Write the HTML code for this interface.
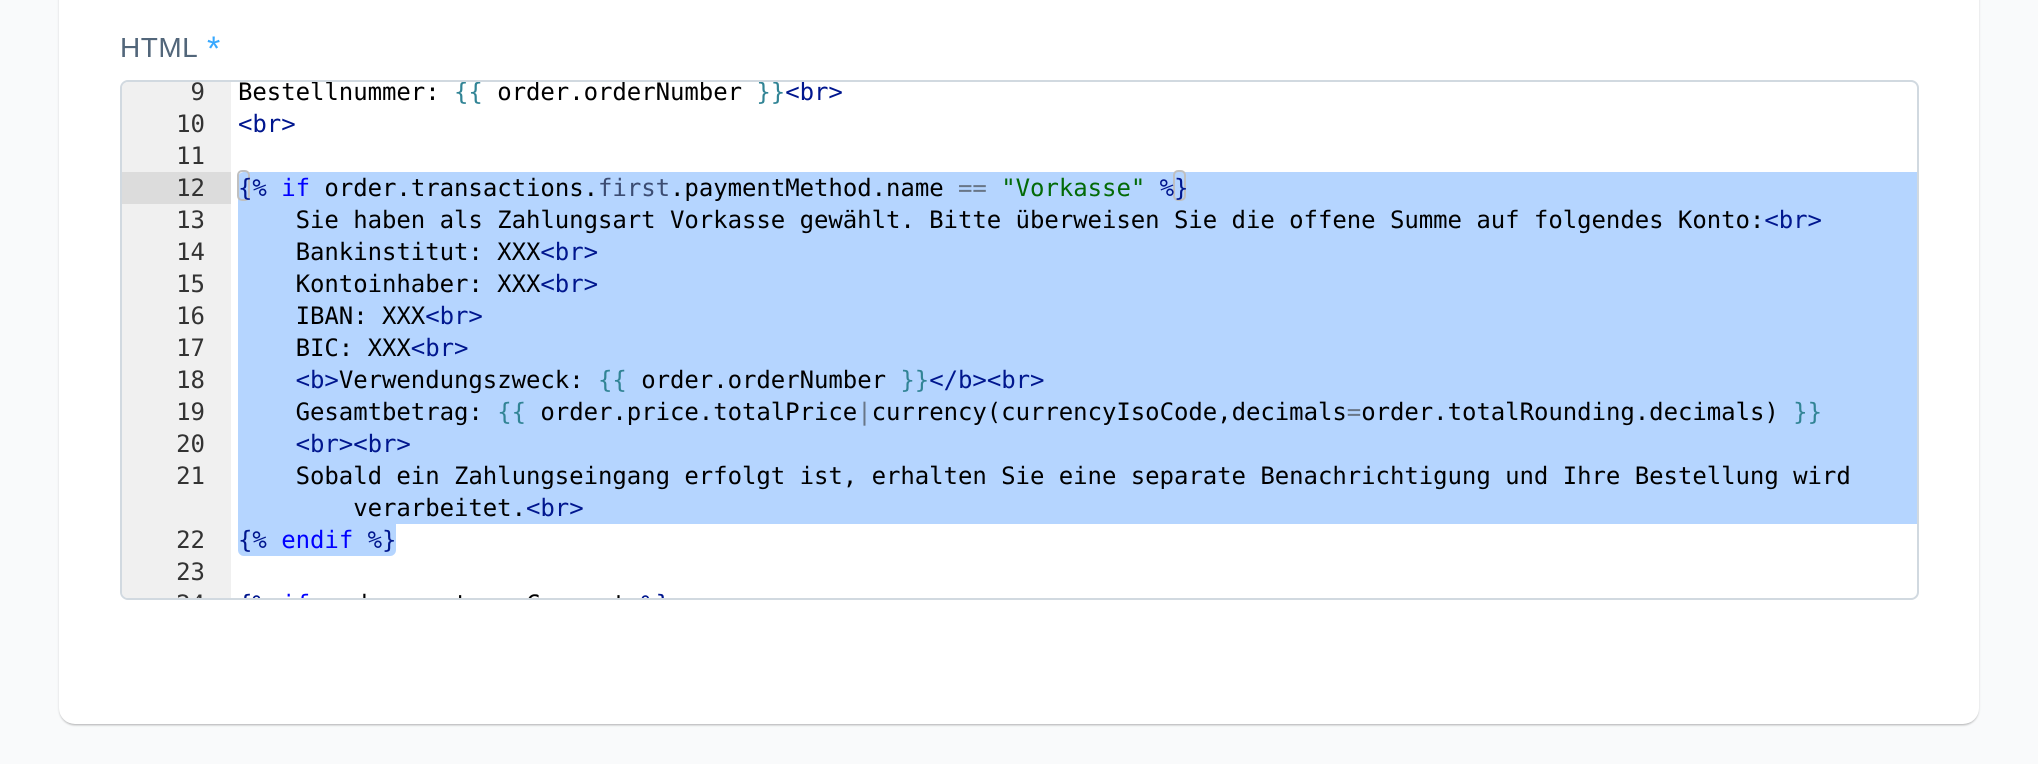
<!DOCTYPE html>
<html lang="de">
<head>
<meta charset="utf-8">
<title>HTML</title>
<style>
html,body{margin:0;padding:0;width:2038px;height:764px;overflow:hidden;background:#f9fafb}
.card{position:absolute;left:59px;top:-40px;width:1920px;height:764px;background:#fff;border-radius:16px;box-shadow:0 2px 2px -1px rgba(0,0,0,.28),0 0 3px rgba(0,0,0,.07)}
.label{position:absolute;left:120px;top:31px;font:28px/34px "Liberation Sans",sans-serif;letter-spacing:.5px;color:#52667a;white-space:pre}
.ast{position:absolute;left:207px;top:32px;font:34px/34px "Liberation Sans",sans-serif;color:#37a8ff}
.ed{position:absolute;left:120px;top:80px;width:1795px;height:516px;border:2px solid #d1d9e0;border-radius:8px;overflow:hidden;background:#fff}
.gut{position:absolute;left:0;top:0;width:109px;height:516px;background:#f0f0f0}
.act{position:absolute;left:0;top:90px;width:109px;height:32px;background:#dcdcdc}
.n{position:absolute;left:0;width:83px;text-align:right;font:24px/32px "DejaVu Sans Mono",monospace;color:#333;text-rendering:geometricPrecision}
.sel{position:absolute;background:#b5d5ff}
.brk{position:absolute;width:9px;height:27px;border:2px solid #c0c0c0;border-radius:5px;box-sizing:content-box}
.l{position:absolute;left:116px;font:24px/32px "DejaVu Sans Mono",monospace;color:#000;white-space:pre;letter-spacing:-.05px;text-rendering:geometricPrecision}
.t{color:#00168e}.k{color:#00f}.v{color:#318495}.o{color:#687687}.s{color:#036a07}.f{color:#3c4c72}
</style>
</head>
<body>
<div class="card"></div>
<div class="label">HTML</div>
<div class="ast">*</div>
<div class="ed">
  <div class="gut"></div>
  <div class="act"></div>
  <div class="n" style="top:-6px">9</div>
  <div class="n" style="top:26px">10</div>
  <div class="n" style="top:58px">11</div>
  <div class="n" style="top:90px">12</div>
  <div class="n" style="top:122px">13</div>
  <div class="n" style="top:154px">14</div>
  <div class="n" style="top:186px">15</div>
  <div class="n" style="top:218px">16</div>
  <div class="n" style="top:250px">17</div>
  <div class="n" style="top:282px">18</div>
  <div class="n" style="top:314px">19</div>
  <div class="n" style="top:346px">20</div>
  <div class="n" style="top:378px">21</div>
  <div class="n" style="top:442px">22</div>
  <div class="n" style="top:474px">23</div>
  <div class="n" style="top:506px">24</div>

  <div class="sel" style="left:116px;top:90px;width:1681px;height:352px;border-top-left-radius:6px"></div>
  <div class="sel" style="left:116px;top:442px;width:158px;height:32px;border-radius:0 0 6px 6px"></div>
  <div class="brk" style="left:115px;top:88px"></div>
  <div class="brk" style="left:1051px;top:88px"></div>

  <div class="l" style="top:-6px">Bestellnummer: <span class="v">{{</span> order.orderNumber <span class="v">}}</span><span class="t">&lt;br&gt;</span></div>
  <div class="l" style="top:26px"><span class="t">&lt;br&gt;</span></div>
  <div class="l" style="top:90px"><span class="t">{%</span> <span class="k">if</span> order.transactions.<span class="f">first</span>.paymentMethod.name <span class="o">==</span> <span class="s">"Vorkasse"</span> <span class="t">%}</span></div>
  <div class="l" style="top:122px">    Sie haben als Zahlungsart Vorkasse gewählt. Bitte überweisen Sie die offene Summe auf folgendes Konto:<span class="t">&lt;br&gt;</span></div>
  <div class="l" style="top:154px">    Bankinstitut: XXX<span class="t">&lt;br&gt;</span></div>
  <div class="l" style="top:186px">    Kontoinhaber: XXX<span class="t">&lt;br&gt;</span></div>
  <div class="l" style="top:218px">    IBAN: XXX<span class="t">&lt;br&gt;</span></div>
  <div class="l" style="top:250px">    BIC: XXX<span class="t">&lt;br&gt;</span></div>
  <div class="l" style="top:282px">    <span class="t">&lt;b&gt;</span>Verwendungszweck: <span class="v">{{</span> order.orderNumber <span class="v">}}</span><span class="t">&lt;/b&gt;&lt;br&gt;</span></div>
  <div class="l" style="top:314px">    Gesamtbetrag: <span class="v">{{</span> order.price.totalPrice<span class="o">|</span>currency(currencyIsoCode,decimals<span class="o">=</span>order.totalRounding.decimals) <span class="v">}}</span></div>
  <div class="l" style="top:346px">    <span class="t">&lt;br&gt;&lt;br&gt;</span></div>
  <div class="l" style="top:378px">    Sobald ein Zahlungseingang erfolgt ist, erhalten Sie eine separate Benachrichtigung und Ihre Bestellung wird</div>
  <div class="l" style="top:410px">        verarbeitet.<span class="t">&lt;br&gt;</span></div>
  <div class="l" style="top:442px"><span class="t">{%</span> <span class="k">endif</span> <span class="t">%}</span></div>
  <div class="l" style="top:506px"><span class="t">{%</span> <span class="k">if</span> order.customerComment <span class="t">%}</span></div>
</div>
</body>
</html>
